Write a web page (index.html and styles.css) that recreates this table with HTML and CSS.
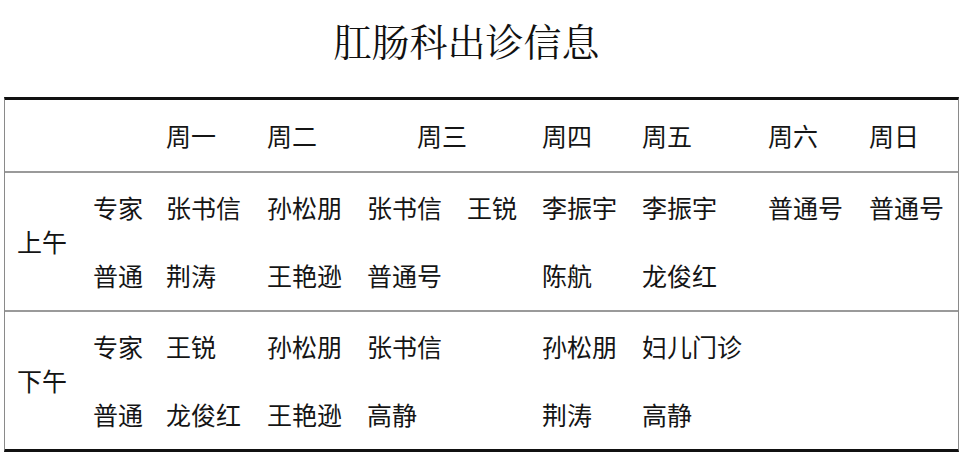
FILE: index.html
```html
<!DOCTYPE html>
<html lang="zh-CN">
<head>
<meta charset="utf-8">
<title>肛肠科出诊信息</title>
<link rel="stylesheet" href="styles.css">
</head>
<body>
<h1 class="title">肛肠科出诊信息</h1>
<div class="schedule">
  <div class="section head">
    <div class="cell"></div>
    <div class="cell"></div>
    <div class="cell">周一</div>
    <div class="cell">周二</div>
    <div class="cell wed">周三</div>
    <div class="cell">周四</div>
    <div class="cell">周五</div>
    <div class="cell">周六</div>
    <div class="cell">周日</div>
  </div>
  <div class="section">
    <div class="cell period">上午</div>
    <div class="cell">专家</div>
    <div class="cell">张书信</div>
    <div class="cell">孙松朋</div>
    <div class="cell">张书信</div>
    <div class="cell">王锐</div>
    <div class="cell">李振宇</div>
    <div class="cell">李振宇</div>
    <div class="cell">普通号</div>
    <div class="cell">普通号</div>
    <div class="cell">普通</div>
    <div class="cell">荆涛</div>
    <div class="cell">王艳逊</div>
    <div class="cell">普通号</div>
    <div class="cell"></div>
    <div class="cell">陈航</div>
    <div class="cell">龙俊红</div>
    <div class="cell"></div>
    <div class="cell"></div>
  </div>
  <div class="section last">
    <div class="cell period">下午</div>
    <div class="cell">专家</div>
    <div class="cell">王锐</div>
    <div class="cell">孙松朋</div>
    <div class="cell">张书信</div>
    <div class="cell"></div>
    <div class="cell">孙松朋</div>
    <div class="cell">妇儿门诊</div>
    <div class="cell"></div>
    <div class="cell"></div>
    <div class="cell">普通</div>
    <div class="cell">龙俊红</div>
    <div class="cell">王艳逊</div>
    <div class="cell">高静</div>
    <div class="cell"></div>
    <div class="cell">荆涛</div>
    <div class="cell">高静</div>
    <div class="cell"></div>
    <div class="cell"></div>
  </div>
</div>
</body>
</html>
```
FILE: styles.css
```css
html, body {
  margin: 0;
  padding: 0;
  background: #ffffff;
}

body {
  font-family: "Noto Sans CJK SC", "Noto Sans", sans-serif;
  color: #151515;
}

.title {
  margin: 0 0 19px 0;
  height: 78px;
  display: flex;
  align-items: center;
  justify-content: center;
  padding-right: 27px;
  font-family: "Noto Serif CJK SC", "Noto Sans CJK SC", serif;
  font-size: 38px;
  font-weight: 400;
  color: #111;
}

.schedule {
  margin-left: 4px;
  width: 953px;
  border-top: 3px solid #111;
  border-bottom: 3px solid #111;
  border-left: 1px solid #8a8a8a;
  border-right: 1px solid #8a8a8a;
}

.section {
  display: grid;
  grid-template-columns: 88px 73px 101px 100px 100px 75px 100px 126px 101px 87px;
  grid-template-rows: 68px 69px;
  border-bottom: 2px solid #9a9a9a;
  font-size: 25px;
  line-height: 1;
}

.section.head {
  grid-template-rows: 71px;
}

.section.last {
  border-bottom: none;
}

.cell {
  display: flex;
  align-items: center;
  white-space: nowrap;
}

.period {
  grid-row: 1 / span 2;
  padding-left: 12px;
}

.wed {
  grid-column: span 2;
  padding-left: 50px;
}
```
